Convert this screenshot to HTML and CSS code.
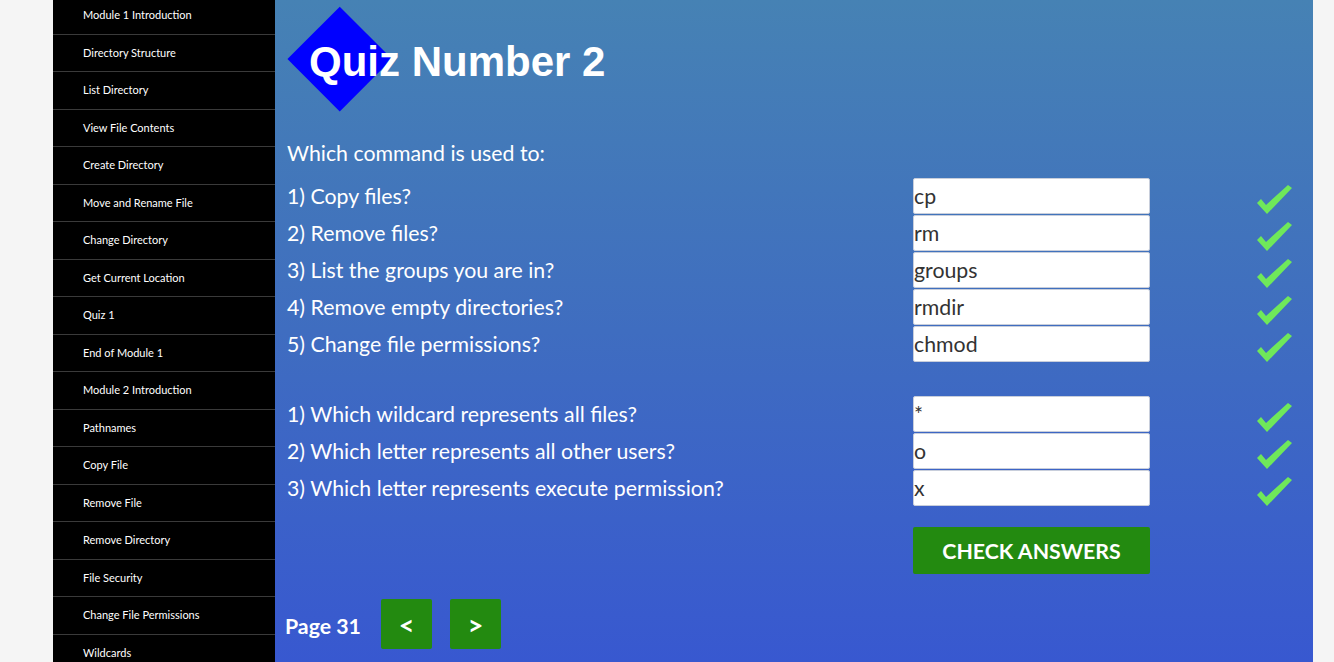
FILE: index.html
```html
<!DOCTYPE html>
<html lang="en">
<head>
<meta charset="utf-8">
<title>Quiz Number 2</title>
<link rel="stylesheet" href="styles.css">
</head>
<body>
<div class="page">
  <nav class="sidebar">
    <ul class="menu">
      <li class="menu-item">Module 1 Introduction</li>
      <li class="menu-item">Directory Structure</li>
      <li class="menu-item">List Directory</li>
      <li class="menu-item">View File Contents</li>
      <li class="menu-item">Create Directory</li>
      <li class="menu-item">Move and Rename File</li>
      <li class="menu-item">Change Directory</li>
      <li class="menu-item">Get Current Location</li>
      <li class="menu-item">Quiz 1</li>
      <li class="menu-item">End of Module 1</li>
      <li class="menu-item">Module 2 Introduction</li>
      <li class="menu-item">Pathnames</li>
      <li class="menu-item">Copy File</li>
      <li class="menu-item">Remove File</li>
      <li class="menu-item">Remove Directory</li>
      <li class="menu-item">File Security</li>
      <li class="menu-item">Change File Permissions</li>
      <li class="menu-item">Wildcards</li>
    </ul>
  </nav>
  <main class="content">
    <header class="header">
      <h1 class="title">Quiz Number 2</h1>
    </header>
    <p class="intro">Which command is used to:</p>
    <div class="quiz-group">
      <div class="quiz-row"><span class="question">1) Copy files?</span><input class="answer" type="text" value="cp"><span></span><svg class="check" viewBox="0 0 35 30"><polygon points="0,18 4,14 9,20 31,0 35,3 10,29"/></svg></div>
      <div class="quiz-row"><span class="question">2) Remove files?</span><input class="answer" type="text" value="rm"><span></span><svg class="check" viewBox="0 0 35 30"><polygon points="0,18 4,14 9,20 31,0 35,3 10,29"/></svg></div>
      <div class="quiz-row"><span class="question">3) List the groups you are in?</span><input class="answer" type="text" value="groups"><span></span><svg class="check" viewBox="0 0 35 30"><polygon points="0,18 4,14 9,20 31,0 35,3 10,29"/></svg></div>
      <div class="quiz-row"><span class="question">4) Remove empty directories?</span><input class="answer" type="text" value="rmdir"><span></span><svg class="check" viewBox="0 0 35 30"><polygon points="0,18 4,14 9,20 31,0 35,3 10,29"/></svg></div>
      <div class="quiz-row"><span class="question">5) Change file permissions?</span><input class="answer" type="text" value="chmod"><span></span><svg class="check" viewBox="0 0 35 30"><polygon points="0,18 4,14 9,20 31,0 35,3 10,29"/></svg></div>
    </div>
    <div class="quiz-group second">
      <div class="quiz-row"><span class="question">1) Which wildcard represents all files?</span><input class="answer" type="text" value="*"><span></span><svg class="check" viewBox="0 0 35 30"><polygon points="0,18 4,14 9,20 31,0 35,3 10,29"/></svg></div>
      <div class="quiz-row"><span class="question">2) Which letter represents all other users?</span><input class="answer" type="text" value="o"><span></span><svg class="check" viewBox="0 0 35 30"><polygon points="0,18 4,14 9,20 31,0 35,3 10,29"/></svg></div>
      <div class="quiz-row"><span class="question">3) Which letter represents execute permission?</span><input class="answer" type="text" value="x"><span></span><svg class="check" viewBox="0 0 35 30"><polygon points="0,18 4,14 9,20 31,0 35,3 10,29"/></svg></div>
    </div>
    <div class="quiz-row actions">
      <span></span><button class="check-btn" type="button">CHECK ANSWERS</button>
    </div>
    <div class="pager">
      <span class="page-label">Page 31</span>
      <button class="nav-btn" type="button">&lt;</button>
      <button class="nav-btn" type="button">&gt;</button>
    </div>
  </main>
</div>
</body>
</html>
```
FILE: styles.css
```css
html, body {
  margin: 0;
  padding: 0;
  height: 100%;
  overflow: hidden;
}
body {
  background: #f5f5f5;
  font-family: Lato, "Open Sans", sans-serif;
}
.page {
  display: flex;
  width: 1260px;
  height: 662px;
  margin-left: 53px;
}
.sidebar {
  width: 222px;
  flex: none;
  background: #000;
  overflow: hidden;
}
.menu {
  list-style: none;
  margin: -3px 0 0;
  padding: 0;
}
.menu-item {
  height: 36.5px;
  line-height: 36.5px;
  padding-left: 30px;
  border-bottom: 1px solid #3a3a3a;
  color: #fff;
  font-size: 11px;
  white-space: nowrap;
}
.content {
  flex: 1;
  padding: 0 12px;
  background: linear-gradient(180deg, #4682b4 0%, #3f6dc0 50%, #3858d0 100%);
  color: #fff;
}
.header {
  position: relative;
  height: 130px;
}
.header::before {
  content: "";
  position: absolute;
  left: 16px;
  top: 22px;
  width: 73.5px;
  height: 73.5px;
  background: #0000ff;
  transform: rotate(45deg);
}
.title {
  position: relative;
  margin: 0;
  padding: 38px 0 0 22px;
  font-family: "Liberation Sans", Arial, sans-serif;
  font-weight: bold;
  font-size: 42px;
  line-height: 48px;
  color: #fff;
}
.intro {
  margin: 11px 0 12px;
  font-size: 21.3px;
  line-height: 25px;
}
.quiz-group {
  display: grid;
  row-gap: 1px;
}
.quiz-group.second {
  margin-top: 34px;
}
.quiz-row {
  display: grid;
  grid-template-columns: 626px 237px 107px 35px;
  align-items: center;
  height: 36px;
}
.question {
  font-size: 21.3px;
  line-height: 25px;
  white-space: nowrap;
}
.answer {
  box-sizing: border-box;
  width: 237px;
  height: 36px;
  margin: 0;
  padding: 0;
  border: 1px solid #c8cedb;
  border-radius: 2px;
  background: #fff;
  color: #333;
  font-family: Lato, sans-serif;
  font-size: 21.3px;
}
.check {
  width: 35px;
  height: 30px;
  align-self: end;
  margin-bottom: -1px;
  fill: #6fe85a;
}
.actions {
  height: 47px;
  margin-top: 21px;
}
.check-btn {
  width: 237px;
  height: 47px;
  border: none;
  border-radius: 2px;
  background: #238a10;
  color: #fff;
  font-family: Lato, sans-serif;
  font-weight: bold;
  font-size: 21.3px;
  cursor: pointer;
}
.pager {
  display: flex;
  align-items: center;
  margin-top: 25px;
}
.page-label {
  font-size: 21.3px;
  font-weight: bold;
  line-height: 25px;
  margin: 4px 20px 0 -2px;
}
.nav-btn {
  width: 51px;
  height: 50px;
  margin-right: 18px;
  border: none;
  border-radius: 2px;
  background: #238a10;
  color: #fff;
  font-family: Lato, sans-serif;
  font-weight: bold;
  font-size: 27px;
  line-height: 1;
  padding: 0;
}
```
